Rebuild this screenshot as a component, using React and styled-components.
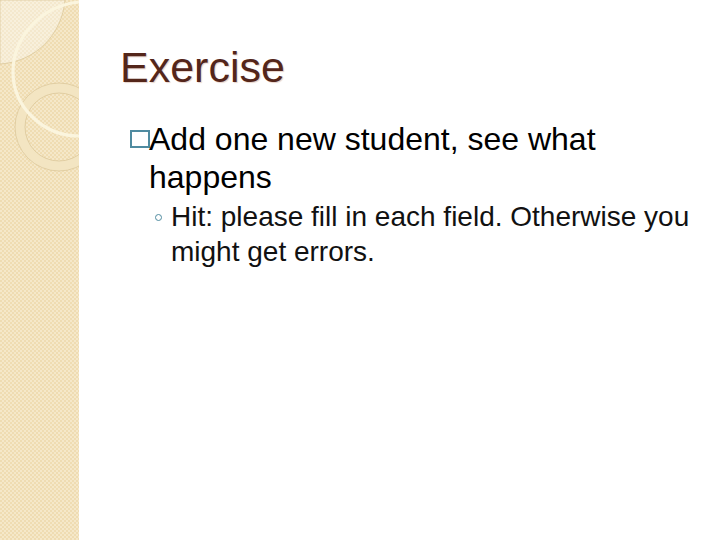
import React from 'react'
import styled, { createGlobalStyle } from 'styled-components'

const GlobalStyle = createGlobalStyle`
  html, body {
    margin: 0;
    padding: 0;
    background: #fff;
  }
`

const Slide = styled.div`
  width: 720px;
  height: 540px;
  display: flex;
  overflow: hidden;
  background: #fff;
  font-family: "Liberation Sans", Arial, sans-serif;
  color: #000;
`

const Sidebar = styled.div`
  width: 79px;
  height: 540px;
  flex: none;
  background-color: #efdcb2;
  background-image:
    linear-gradient(45deg, #f5e8c9 25%, transparent 25%, transparent 75%, #f5e8c9 75%),
    linear-gradient(45deg, #f5e8c9 25%, transparent 25%, transparent 75%, #f5e8c9 75%);
  background-size: 4px 4px;
  background-position: 0 0, 2px 2px;
`

const SidebarArt = styled.svg`
  display: block;
`

const Content = styled.div`
  flex: 1;
  padding: 42px 20px 0 41px;
`

const Title = styled.h1`
  margin: 0 0 28px;
  font-size: 43px;
  line-height: 50px;
  font-weight: 400;
  color: #54261a;
  text-shadow: 1px 1px 1px #e6d3ca;
`

const Point = styled.div`
  margin-left: 11px;
  padding-left: 18px;
  font-size: 32px;
  line-height: 38px;
`

const Square = styled.span`
  display: inline-block;
  box-sizing: border-box;
  width: 20px;
  height: 18px;
  margin-left: -19px;
  margin-right: -1px;
  vertical-align: 2px;
  border: 2px solid #4f8ba0;
`

const SubPoint = styled.div`
  margin: 3px 0 0 51px;
  font-size: 28px;
  line-height: 35px;
  color: #111;
`

const Ring = styled.span`
  display: inline-block;
  box-sizing: border-box;
  width: 7px;
  height: 7px;
  margin-left: -16px;
  margin-right: 9px;
  vertical-align: 5px;
  border: 1px solid #4f8ba0;
  border-radius: 50%;
`

export default function App() {
  return (
    <>
      <GlobalStyle />
      <Slide>
        <Sidebar>
          <SidebarArt width="79" height="200" viewBox="0 0 79 200">
            <path d="M0 0H65C62 35 35 62 0 64Z" fill="#fff" fillOpacity="0.35" stroke="#dcc99c" strokeWidth="0.8" />
            <circle cx="59" cy="127" r="39" fill="none" stroke="#f3e5c2" strokeWidth="10" />
            <circle cx="59" cy="127" r="44" fill="none" stroke="#dcc89b" strokeWidth="0.8" />
            <circle cx="59" cy="127" r="34" fill="none" stroke="#dcc89b" strokeWidth="0.8" />
            <path d="M79 2C40 6 13 38 13 72C13 108 44 136 79 136" fill="none" stroke="#fbf5de" strokeWidth="3.2" />
          </SidebarArt>
        </Sidebar>
        <Content>
          <Title>Exercise</Title>
          <Point><Square />Add one new student, see what happens</Point>
          <SubPoint><Ring />Hit: please fill in each field. Otherwise you might get errors.</SubPoint>
        </Content>
      </Slide>
    </>
  )
}
